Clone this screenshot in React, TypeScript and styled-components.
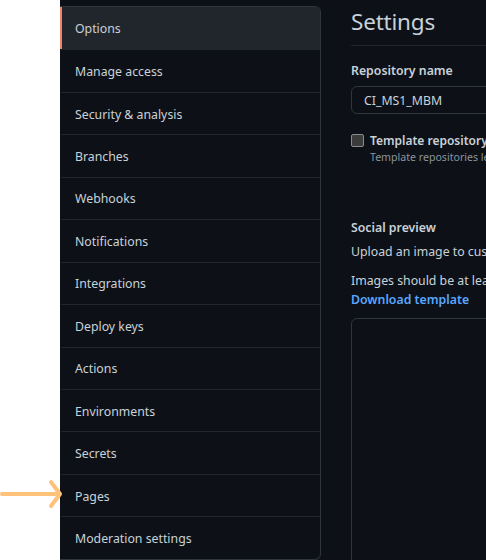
import React from 'react';
import styled, { createGlobalStyle } from 'styled-components';

const GlobalStyle = createGlobalStyle`
  html, body {
    margin: 0;
    padding: 0;
    background: #ffffff;
    overflow: hidden;
  }
  body {
    font-family: 'Noto Sans', 'Open Sans', sans-serif;
    -webkit-font-smoothing: antialiased;
  }
`;

const MENU_ITEMS = [
  'Options',
  'Manage access',
  'Security & analysis',
  'Branches',
  'Webhooks',
  'Notifications',
  'Integrations',
  'Deploy keys',
  'Actions',
  'Environments',
  'Secrets',
  'Pages',
  'Moderation settings',
];

const App: React.FC = () => {
  return (
    <>
      <GlobalStyle />
      <Screen>
        <Gutter>
          <Arrow width="64" height="30" viewBox="0 0 64 30">
            <path
              d="M2 15 H59 M51 3 L60 15 L51 27"
              fill="none"
              stroke="#ffc27a"
              strokeWidth="4"
              strokeLinecap="round"
              strokeLinejoin="round"
            />
          </Arrow>
        </Gutter>
        <Dark>
          <Sidebar>
            {MENU_ITEMS.map((item, i) => (
              <MenuItem key={item} selected={i === 0}>
                {item}
              </MenuItem>
            ))}
          </Sidebar>
          <Main>
            <Heading>Settings</Heading>
            <FieldLabel>Repository name</FieldLabel>
            <TextInput>CI_MS1_MBM</TextInput>
            <CheckRow>
              <CheckBox />
              <div>
                <CheckTitle>Template repository</CheckTitle>
                <CheckNote>
                  Template repositories let users generate new repositories with the same directory structure and files.
                </CheckNote>
              </div>
            </CheckRow>
            <SectionTitle>Social preview</SectionTitle>
            <Body>Upload an image to customize your repository’s social media preview.</Body>
            <Body spaced>Images should be at least 640×320px (1280×640px for best display).</Body>
            <BlueLink>Download template</BlueLink>
            <PreviewBox />
          </Main>
        </Dark>
      </Screen>
    </>
  );
};

const Screen = styled.div`
  display: flex;
  width: 486px;
  height: 560px;
  overflow: hidden;
`;

const Gutter = styled.div`
  position: relative;
  flex: 0 0 60px;
  background: #ffffff;
`;

const Arrow = styled.svg`
  position: absolute;
  left: 0;
  top: 479px;
  z-index: 2;
`;

const Dark = styled.div`
  flex: 1;
  display: flex;
  gap: 30px;
  padding-top: 6px;
  background: #0d1117;
  min-width: 0;
`;

const Sidebar = styled.nav`
  flex: 0 0 260px;
  align-self: flex-start;
  border: 1px solid #30363d;
  border-left: none;
  border-radius: 0 6px 6px 0;
  overflow: hidden;
`;

const MenuItem = styled.div<{ selected?: boolean }>`
  display: flex;
  align-items: center;
  height: 42.45px;
  box-sizing: border-box;
  padding: 1px 0 0 13px;
  font-size: 12.3px;
  color: #c9d1d9;
  background: ${(p) => (p.selected ? '#21262d' : 'transparent')};
  border-left: 2px solid ${(p) => (p.selected ? '#f78166' : 'transparent')};
  border-top: 1px solid #21262d;

  &:first-child {
    border-top: none;
  }
`;

const Main = styled.main`
  flex: 0 0 700px;
  white-space: nowrap;
  color: #c9d1d9;
`;

const Heading = styled.h2`
  margin: 0;
  padding: 1px 0 8px;
  font-size: 22.5px;
  font-weight: 400;
  letter-spacing: -0.2px;
  line-height: 30px;
  border-bottom: 1px solid #21262d;
`;

const FieldLabel = styled.div`
  margin-top: 15px;
  font-size: 12.3px;
  font-weight: 600;
  line-height: 20px;
`;

const TextInput = styled.div`
  margin-top: 5px;
  width: 300px;
  height: 28px;
  box-sizing: border-box;
  padding: 0 12px;
  display: flex;
  align-items: center;
  font-size: 12.3px;
  border: 1px solid #30363d;
  border-radius: 6px;
  background: #0d1117;
`;

const CheckRow = styled.div`
  display: flex;
  gap: 6px;
  margin-top: 18px;
`;

const CheckBox = styled.span`
  flex: 0 0 auto;
  width: 11px;
  height: 11px;
  margin-top: 2px;
  border: 1px solid #8b8b8b;
  border-radius: 2px;
  background: #3b3b3b;
`;

const CheckTitle = styled.div`
  font-size: 12px;
  font-weight: 600;
  line-height: 17px;
`;

const CheckNote = styled.div`
  font-size: 10.6px;
  line-height: 16px;
  color: #8b949e;
`;

const SectionTitle = styled.div`
  margin-top: 53px;
  font-size: 12.3px;
  font-weight: 600;
  line-height: 20px;
`;

const Body = styled.div<{ spaced?: boolean }>`
  margin-top: ${(p) => (p.spaced ? '9px' : '4px')};
  font-size: 12.3px;
  line-height: 20px;
`;

const BlueLink = styled.div`
  font-size: 12.3px;
  font-weight: 600;
  line-height: 18px;
  color: #58a6ff;
`;

const PreviewBox = styled.div`
  margin-top: 9px;
  width: 640px;
  height: 320px;
  border: 1px solid #30363d;
  border-radius: 6px;
`;

export default App;
